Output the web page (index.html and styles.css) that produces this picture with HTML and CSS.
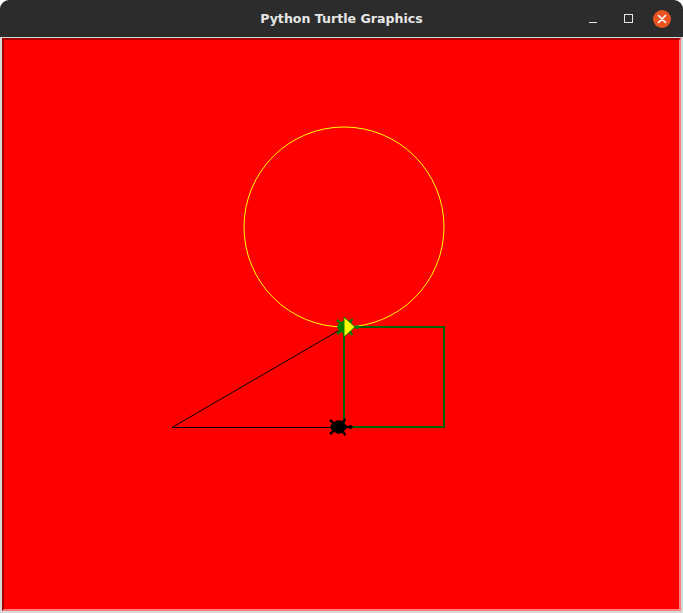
FILE: index.html
```html
<!DOCTYPE html>
<html>
<head>
<meta charset="utf-8">
<link rel="stylesheet" href="styles.css">
</head>
<body>
<div class="window">
  <div class="titlebar">
    <span class="title">Python Turtle Graphics</span>
    <div class="controls">
      <span class="btn-min"></span>
      <span class="btn-max"></span>
      <span class="btn-close">
        <svg width="18" height="18" viewBox="0 0 18 18"><path d="M5.5 5.5 L12.5 12.5 M12.5 5.5 L5.5 12.5" stroke="#fff" stroke-width="1.6" stroke-linecap="round"/></svg>
      </span>
    </div>
  </div>
  <div class="frame">
    <div class="canvas">
      <svg class="drawing" width="675" height="569" viewBox="4 40 675 569">
        <circle cx="344" cy="227" r="100" fill="none" stroke="#ffff00" stroke-width="1"/>
        <path d="M172 427.5 L344 427.5 M172 427.5 L344 327.5" stroke="#000" stroke-width="1" fill="none"/>
        <rect x="344" y="327" width="100" height="100" fill="none" stroke="#006400" stroke-width="2"/>
        <g transform="translate(337 427)">
          <polygon fill="#000" points="16,0 14,-2 10,-1 7,-4 9,-7 8,-9 5,-6 1,-7 -3,-5 -6,-8 -8,-6 -5,-4 -7,0 -5,4 -8,6 -6,8 -3,5 1,7 5,6 8,9 9,7 7,4 10,1 14,2"/>
        </g>
        <g transform="translate(344 327)">
          <polygon fill="#008000" points="16,0 14,-2 10,-1 7,-4 9,-7 8,-9 5,-6 1,-7 -3,-5 -6,-8 -8,-6 -5,-4 -7,0 -5,4 -8,6 -6,8 -3,5 1,7 5,6 8,9 9,7 7,4 10,1 14,2"/>
          <polygon fill="#ffff00" stroke="#008000" stroke-width="1" points="0,-10 11,0 0,10"/>
        </g>
      </svg>
    </div>
  </div>
</div>
</body>
</html>
```

FILE: styles.css
```css
html, body {
  margin: 0;
  padding: 0;
  background: #ffffff;
  width: 683px;
  height: 613px;
  overflow: hidden;
}

.window {
  display: flex;
  flex-direction: column;
  width: 683px;
  height: 613px;
}

.titlebar {
  height: 37px;
  flex: none;
  background: #2c2c2c;
  border-radius: 9px 9px 0 0;
  position: relative;
  display: flex;
  align-items: center;
  justify-content: center;
}

.title {
  font-family: "DejaVu Sans", "Liberation Sans", sans-serif;
  font-weight: bold;
  font-size: 12.6px;
  color: #e6e6e6;
  letter-spacing: 0;
}

.controls {
  position: absolute;
  right: 12px;
  top: 0;
  height: 37px;
  display: flex;
  align-items: center;
  gap: 0;
}

.btn-min {
  width: 8px;
  height: 1px;
  background: #e6e6e6;
  margin-top: 7px;
  margin-right: 27px;
}

.btn-max {
  width: 7px;
  height: 7px;
  border: 1px solid #e6e6e6;
  margin-right: 20px;
}

.btn-close {
  width: 18px;
  height: 18px;
  border-radius: 50%;
  background: #e95420;
  display: flex;
}

.frame {
  flex: 1;
  background: #d9d9d9;
  padding: 1px 2px 2px 2px;
  display: flex;
}

.canvas {
  flex: 1;
  background: #ff0000;
  border-style: solid;
  border-width: 2px;
  border-color: #a40000 #ff8080 #ff8080 #a40000;
  overflow: hidden;
}

.drawing {
  display: block;
}
```
